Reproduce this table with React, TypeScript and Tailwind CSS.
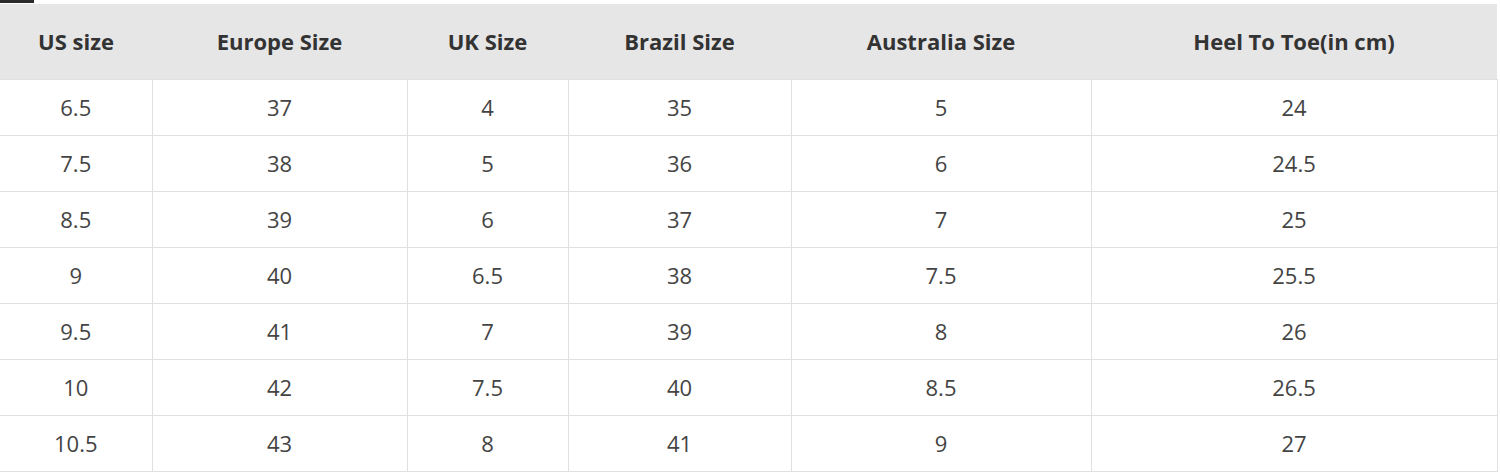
const headers = ["US size", "Europe Size", "UK Size", "Brazil Size", "Australia Size", "Heel To Toe(in cm)"];
const widths = ["w-[152px]", "w-[255px]", "w-[161px]", "w-[223px]", "w-[300px]", "w-[406px]"];

const rows = [
  ["6.5", "37", "4", "35", "5", "24"],
  ["7.5", "38", "5", "36", "6", "24.5"],
  ["8.5", "39", "6", "37", "7", "25"],
  ["9", "40", "6.5", "38", "7.5", "25.5"],
  ["9.5", "41", "7", "39", "8", "26"],
  ["10", "42", "7.5", "40", "8.5", "26.5"],
  ["10.5", "43", "8", "41", "9", "27"],
];

export default function App() {
  return (
    <div className="w-[1500px] h-[475px] bg-white font-['Open_Sans',sans-serif]">
      <div className="h-[3px] w-[34px] bg-[#2a2a2a]" />
      <div className="pt-px">
        <table className="table-fixed border-collapse w-[1497px]">
          <colgroup>
            {widths.map((w, i) => (
              <col key={i} className={w} />
            ))}
          </colgroup>
          <thead>
            <tr className="h-[75px] bg-[#e6e6e6]">
              {headers.map((h) => (
                <th key={h} className="text-center text-[22px] font-bold text-[#333] p-0">
                  {h}
                </th>
              ))}
            </tr>
          </thead>
          <tbody>
            {rows.map((r, i) => (
              <tr key={i} className="h-[56px]">
                {r.map((c, j) => (
                  <td
                    key={j}
                    className="border border-[#e0e0e0] text-center text-[22px] text-[#444] p-0 first:border-l-0"
                  >
                    {c}
                  </td>
                ))}
              </tr>
            ))}
          </tbody>
        </table>
      </div>
    </div>
  );
}
